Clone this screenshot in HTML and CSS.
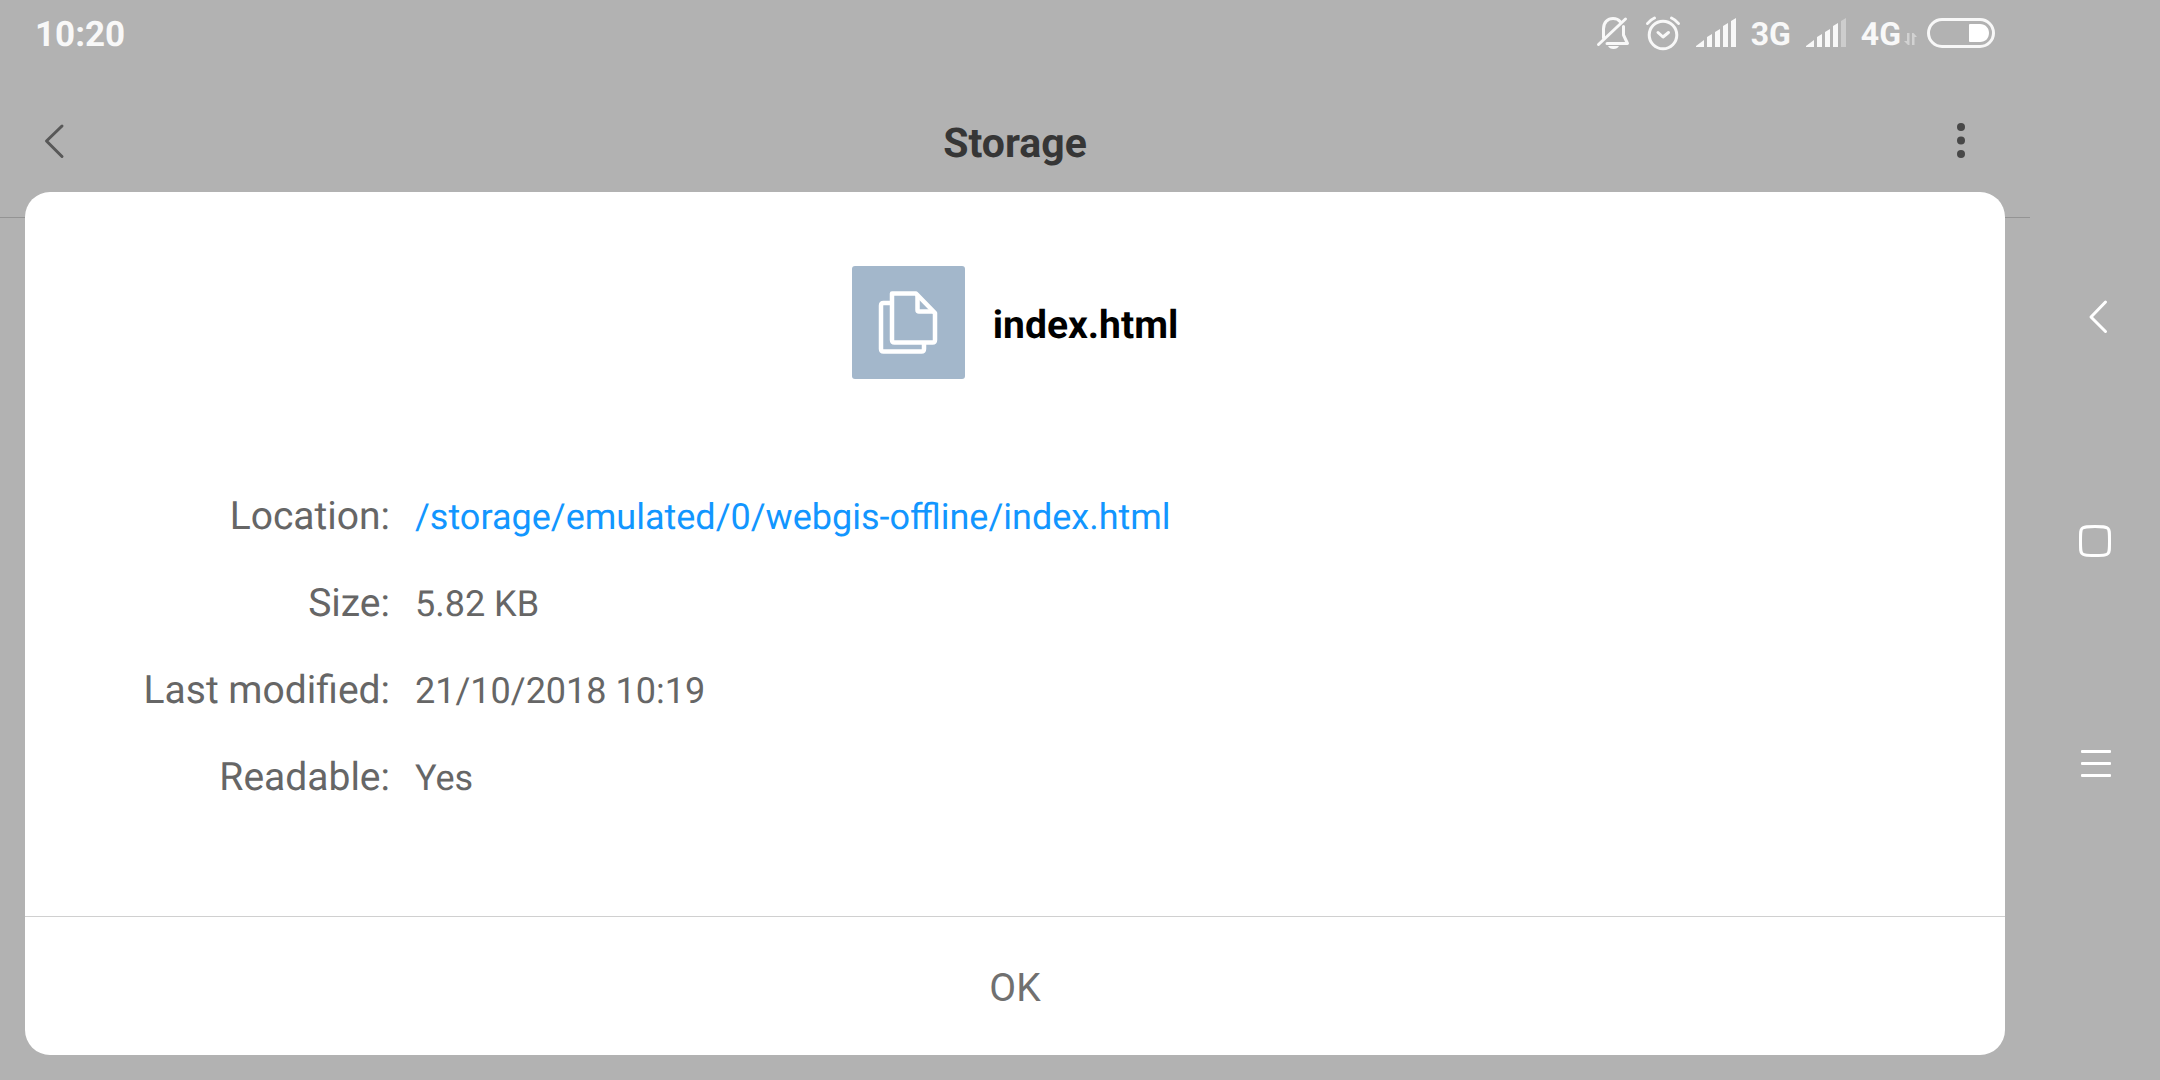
FILE: index.html
```html
<!DOCTYPE html>
<html lang="en">
<head>
<meta charset="utf-8">
<meta name="viewport" content="width=device-width, initial-scale=1">
<title>Storage</title>
<link rel="stylesheet" href="styles.css">
</head>
<body>
<div class="device">
  <main class="screen">
    <div class="status">
      <time class="clock">10:20</time>
      <div class="indicators">
        <svg class="bell" width="34" height="34" viewBox="0 0 34 34" fill="none" stroke="#f8f8f8" stroke-width="3" stroke-linecap="round" stroke-linejoin="round" aria-label="Silent">
          <path d="M7.500 22V13C7.500 6 12 2.500 17 2.500C20 2.500 22.500 3.500 24 5.500M27.500 10.500V19L31.500 27.500H11M2.500 28.500L29.500 3"/>
          <path d="M12 30H23Q21.500 33 17.500 33T12 30Z" fill="#f8f8f8" stroke="none"/>
        </svg>
        <svg class="alarm" width="36" height="36" viewBox="0 0 36 36" fill="none" stroke="#f8f8f8" stroke-width="3" stroke-linecap="round" stroke-linejoin="round" aria-label="Alarm">
          <circle cx="18" cy="20" r="13.800"/>
          <path d="M13 17.500L18 22L23.500 17.500M2.500 8.500Q5 5 9.500 3M33.500 8.500Q31 5 26.500 3" />
        </svg>
        <svg class="signal" width="40" height="30" viewBox="0 0 40 30" fill="#f8f8f8" aria-label="Signal full">
          <path d="M0 28L8 22V29H0ZM11 19L16 16V29H11ZM19 14L24 11V29H19ZM27 8L32 5V29H27ZM35 3L40 0V29H35Z"/>
        </svg>
        <span class="network">3G</span>
        <svg class="signal" width="40" height="30" viewBox="0 0 40 30" fill="#f8f8f8" aria-label="Signal four bars">
          <path d="M0 28L8 22V29H0ZM11 19L16 16V29H11ZM19 14L24 11V29H19ZM27 8L32 5V29H27Z"/>
          <path d="M35 3L40 0V29H35Z" fill="#cdcdcd"/>
        </svg>
        <span class="network">4G</span>
        <svg class="traffic" width="14" height="13" viewBox="0 0 14 13" fill="#d2d2d2" aria-hidden="true">
          <path d="M3 0H5.500V12H4L0 8H3ZM8 0H9.500L13 4H10.500V12H8Z"/>
        </svg>
        <svg class="battery" width="68" height="30" viewBox="0 0 68 30" fill="none" aria-label="Battery">
          <rect x="1.500" y="1.500" width="65" height="27" rx="13.500" stroke="#f8f8f8" stroke-width="3"/>
          <path d="M43 6H53C58.500 6 62 10 62 15S58.500 24 53 24H43Q42 24 42 23V7Q42 6 43 6Z" fill="#fff"/>
        </svg>
      </div>
    </div>
    <header class="appbar">
      <button class="icon-button" aria-label="Back">
        <svg width="48" height="48" viewBox="0 0 48 48" fill="none" stroke="#585858" stroke-width="3" stroke-linecap="round" stroke-linejoin="round"><path d="M26 6L10.500 21L26 36.500"/></svg>
      </button>
      <h1 class="heading">Storage</h1>
      <button class="icon-button" aria-label="More options">
        <svg width="48" height="48" viewBox="0 0 48 48" fill="#484848"><circle cx="15" cy="7" r="4"/><circle cx="15" cy="20.500" r="4"/><circle cx="15" cy="34" r="4"/></svg>
      </button>
    </header>

    <section class="dialog" role="dialog" aria-labelledby="file-name">
      <div class="file">
        <svg class="file-icon" width="113" height="113" viewBox="0 0 113 113" fill="none" stroke="#fff" stroke-width="4.500" stroke-linejoin="round" aria-hidden="true">
          <rect width="113" height="113" rx="3" fill="#a3b7cb" stroke="none"/>
          <path d="M40 27.500H64L83 47V74Q83 76.500 80.500 76.500H42.500Q40 76.500 40 74Z"/>
          <path d="M65.500 29V44Q65.500 45.500 67 45.500H82"/>
          <path d="M38 37H31.500Q29 37 29 39.500V83Q29 85.500 31.500 85.500H69.500Q72 85.500 72 83V78"/>
        </svg>
        <h2 class="file-name" id="file-name">index.html</h2>
      </div>
      <dl class="details">
        <dt>Location:</dt><dd><a href="#location">/storage/emulated/0/webgis-offline/index.html</a></dd>
        <dt>Size:</dt><dd>5.82 KB</dd>
        <dt>Last modified:</dt><dd>21/10/2018 10:19</dd>
        <dt>Readable:</dt><dd>Yes</dd>
      </dl>
      <button class="confirm">OK</button>
    </section>
  </main>
  <nav class="navbar" aria-label="System">
    <button class="nav-button" aria-label="Back">
      <svg width="48" height="48" viewBox="0 0 48 48" fill="none" stroke="#fff" stroke-width="3" stroke-linecap="round" stroke-linejoin="round"><path d="M34.500 9L20 24L34.500 38.500"/></svg>
    </button>
    <button class="nav-button" aria-label="Home">
      <svg width="48" height="48" viewBox="0 0 48 48" fill="none" stroke="#fff" stroke-width="3"><path d="M24 10.500C34 10.500 35.500 11 37 12.500S38.500 15.500 38.500 25S38.500 36 37 37.500S34 39.500 24 39.500S12.500 39 11 37.500S9.500 34.500 9.500 25S9.500 14 11 12.500S14 10.500 24 10.500Z"/></svg>
    </button>
    <button class="nav-button" aria-label="Menu">
      <svg width="48" height="48" viewBox="0 0 48 48" fill="#fff"><rect x="10" y="11" width="30" height="3" rx="1"/><rect x="10" y="23" width="30" height="3" rx="1"/><rect x="10" y="35" width="30" height="3" rx="1"/></svg>
    </button>
  </nav>
</div>
</body>
</html>
```

FILE: styles.css
```css
* {
  box-sizing: border-box;
}

body {
  margin: 0;
  background: #b2b2b2;
  color: #666;
  font-family: Roboto, "Liberation Sans", sans-serif;
  font-size: 39px;
  text-rendering: geometricPrecision;
}

button {
  border: 0;
  padding: 0;
  background: none;
  color: inherit;
  font: inherit;
}

svg {
  display: block;
  flex: none;
}

.device {
  display: grid;
  grid-template-columns: 1fr 130px;
  min-height: 100vh;
}

.screen {
  position: relative;
}

.status {
  display: flex;
  justify-content: space-between;
  align-items: center;
  height: 68px;
  padding: 0 35px;
  color: #f8f8f8;
  font-weight: 700;
}

.clock {
  font-size: 35px;
}

.indicators {
  display: flex;
  align-items: center;
  gap: 15px;
}

.indicators svg {
  margin-bottom: 2px;
}

.network {
  font-size: 32px;
}

.indicators .traffic {
  align-self: flex-end;
  margin: 0 -6px 7px -12px;
}

.appbar {
  display: flex;
  justify-content: space-between;
  align-items: center;
  height: 150px;
  padding: 3px 36px 0;
  border-bottom: 1px solid #949494;
}

.icon-button {
  width: 48px;
}

.heading,
.file-name {
  margin: 0;
  font-weight: 700;
}

.heading {
  color: #363636;
  font-size: 41px;
}

.dialog {
  position: absolute;
  right: 25px;
  bottom: 25px;
  left: 25px;
  padding-top: 74px;
  border-radius: 25px;
  background: #fff;
}

.file {
  display: flex;
  justify-content: center;
  align-items: center;
  gap: 28px;
}

.file-name {
  padding-top: 4px;
  color: #000;
  font-size: 39px;
}

.details {
  display: grid;
  grid-template-columns: 365px 1fr;
  grid-auto-rows: 87px;
  column-gap: 25px;
  align-items: baseline;
  margin: 0;
  padding: 114px 0 75px;
  line-height: 47px;
}

.details dt {
  text-align: right;
}

.details dd {
  margin: 0;
  font-size: 36px;
}

.details a {
  color: #1296ff;
  text-decoration: none;
}

.confirm {
  display: block;
  width: 100%;
  height: 139px;
  padding-top: 4px;
  border-top: 1px solid #d0d0d0;
  color: #707070;
}

.navbar {
  display: flex;
  flex-direction: column;
  justify-content: center;
  align-items: center;
  gap: 175px;
}

.nav-button {
  width: 48px;
}
```
